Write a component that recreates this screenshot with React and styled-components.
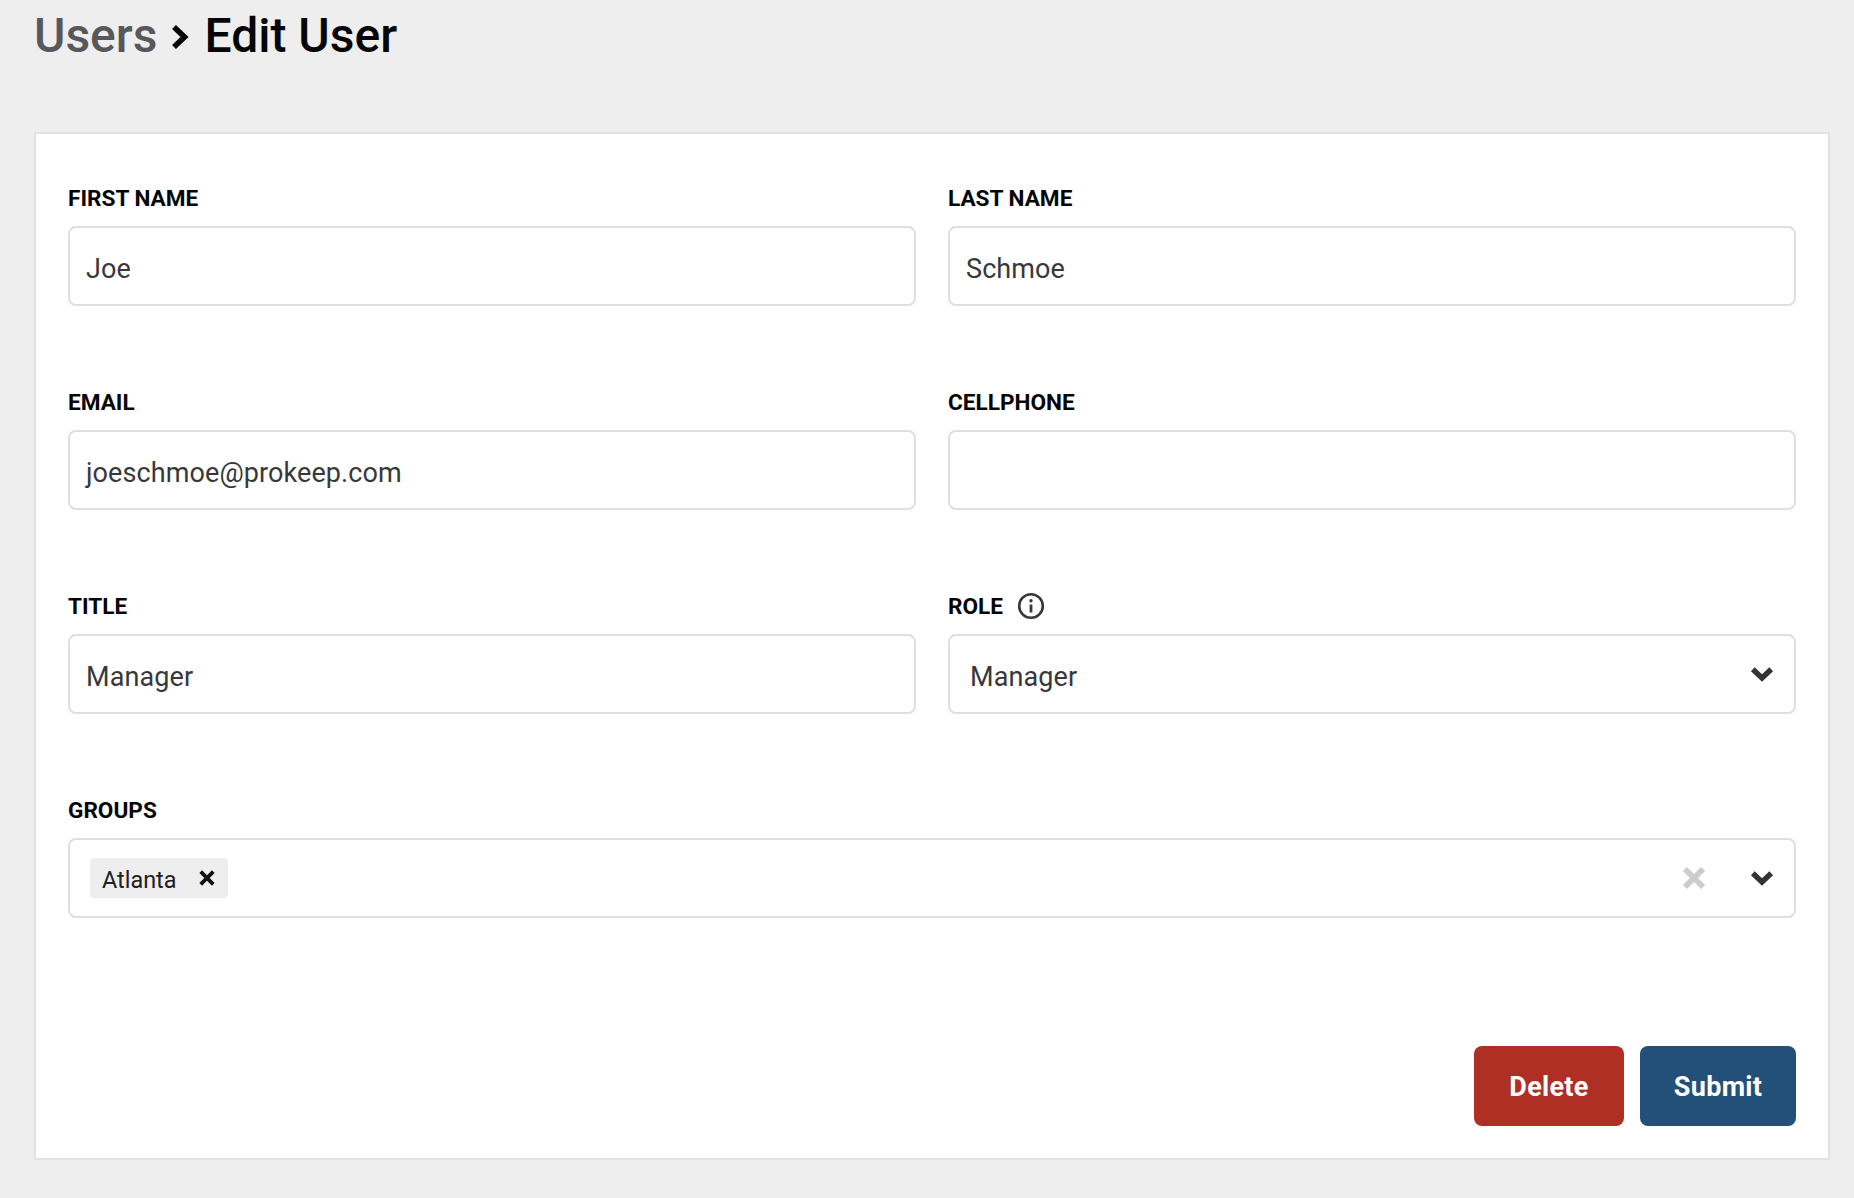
import styled, { createGlobalStyle } from "styled-components"

const GlobalStyle = createGlobalStyle`
  * { box-sizing: border-box; }
  html, body { margin: 0; padding: 0; background: #eeeeee; }
  body { font-family: Roboto, "Liberation Sans", sans-serif; }
`

const Page = styled.div`
  height: 1198px;
  padding: 0 24px 0 34px;
`
const Breadcrumb = styled.div`
  height: 132px;
  padding-top: 9px;
  display: flex;
  align-items: flex-start;
  font-size: 48px;
  line-height: 54px;
  font-weight: 500;
`
const Crumb = styled.span`
  color: ${p => (p.$muted ? "#58585c" : "#060606")};
`
const Separator = styled.svg`
  width: 22px;
  height: 30px;
  margin: 13px 12px 0 13px;
`
const Panel = styled.div`
  width: 1796px;
  height: 1028px;
  background: #fff;
  border: 2px solid #e3e3e3;
  padding: 50px 32px 32px 32px;
  display: flex;
  flex-direction: column;
`
const FieldGrid = styled.div`
  display: grid;
  grid-template-columns: 848px 848px;
  column-gap: 32px;
  row-gap: 82px;
`
const Field = styled.div`
  grid-column: ${p => (p.$wide ? "1 / span 2" : "auto")};
`
const LabelRow = styled.div`
  height: 30px;
  margin-bottom: 12px;
  display: flex;
  align-items: center;
  gap: 14px;
`
const Label = styled.label`
  font-size: 22.6px;
  line-height: 30px;
  font-weight: 700;
  color: #060606;
`
const Box = styled.div`
  height: 80px;
  border: 2px solid #e0e0e0;
  border-radius: 8px;
  background: #fff;
  display: flex;
  align-items: center;
  padding: ${p => p.$padding || "0 16px"};
  font-size: 27px;
  letter-spacing: 0.1px;
  color: #38383a;
`
const Value = styled.span`
  flex: 1;
  padding-top: 5px;
`
const Tag = styled.div`
  height: 40px;
  width: 138px;
  padding: 0 12px;
  border-radius: 4px;
  background: #eeeeee;
  display: flex;
  align-items: center;
  justify-content: space-between;
  font-size: 23.4px;
  letter-spacing: 0;
  color: #202022;
`
const TagText = styled.span`
  padding-top: 3px;
`
const Spacer = styled.div`
  flex: 1;
`
const IconSlot = styled.svg`
  display: block;
  flex: none;
`
const Actions = styled.div`
  margin-top: auto;
  display: flex;
  justify-content: flex-end;
  gap: 16px;
`
const Button = styled.button`
  height: 80px;
  width: ${p => p.$width}px;
  padding: 2px 0 0;
  border: none;
  border-radius: 8px;
  background: ${p => p.$bg};
  color: #fff;
  font-family: inherit;
  font-size: 27px;
  font-weight: 700;
  letter-spacing: 0.3px;
`

const Chevron = ({ style }) => (
  <IconSlot style={style} width="24" height="16" viewBox="0 0 24 16">
    <path d="M2.8 3.2 12 12 21.2 3.2" fill="none" stroke="#333" strokeWidth="5.4" />
  </IconSlot>
)

const Cross = ({ size, color, weight }) => (
  <IconSlot width={size} height={size} viewBox="0 0 20 20">
    <path d="M3 3 17 17M17 3 3 17" fill="none" stroke={color} strokeWidth={weight} />
  </IconSlot>
)

const InfoIcon = () => (
  <IconSlot width="28" height="28" viewBox="0 0 28 28" style={{ marginTop: -2 }}>
    <circle cx="14" cy="14" r="11.8" fill="none" stroke="#38383a" strokeWidth="2.6" />
    <circle cx="14" cy="8.8" r="1.7" fill="#38383a" />
    <path d="M14 12.5v8" fill="none" stroke="#38383a" strokeWidth="2.8" />
  </IconSlot>
)

const App = () => {
  return (
    <Page>
      <GlobalStyle />
      <Breadcrumb>
        <Crumb $muted>Users</Crumb>
        <Separator viewBox="0 0 22 30">
          <path d="M3 5 13.5 15 3 25" fill="none" stroke="#060606" strokeWidth="5.6" />
        </Separator>
        <Crumb>Edit User</Crumb>
      </Breadcrumb>
      <Panel>
        <FieldGrid>
          <Field>
            <LabelRow><Label>FIRST NAME</Label></LabelRow>
            <Box><Value>Joe</Value></Box>
          </Field>
          <Field>
            <LabelRow><Label>LAST NAME</Label></LabelRow>
            <Box><Value>Schmoe</Value></Box>
          </Field>
          <Field>
            <LabelRow><Label>EMAIL</Label></LabelRow>
            <Box><Value>joeschmoe@prokeep.com</Value></Box>
          </Field>
          <Field>
            <LabelRow><Label>CELLPHONE</Label></LabelRow>
            <Box />
          </Field>
          <Field>
            <LabelRow><Label>TITLE</Label></LabelRow>
            <Box><Value>Manager</Value></Box>
          </Field>
          <Field>
            <LabelRow><Label>ROLE</Label><InfoIcon /></LabelRow>
            <Box $padding="0 20px 0 20px">
              <Value>Manager</Value>
              <Chevron />
            </Box>
          </Field>
          <Field $wide>
            <LabelRow><Label>GROUPS</Label></LabelRow>
            <Box $padding="0 20px 0 20px">
              <Tag>
                <TagText>Atlanta</TagText>
                <Cross size={18} color="#111" weight={4.2} />
              </Tag>
              <Spacer />
              <Cross size={26} color="#cccccc" weight={4.4} />
              <Chevron style={{ marginLeft: 43 }} />
            </Box>
          </Field>
        </FieldGrid>
        <Actions>
          <Button $bg="#af2f24" $width={150}>Delete</Button>
          <Button $bg="#235079" $width={156}>Submit</Button>
        </Actions>
      </Panel>
    </Page>
  )
}

export default App
